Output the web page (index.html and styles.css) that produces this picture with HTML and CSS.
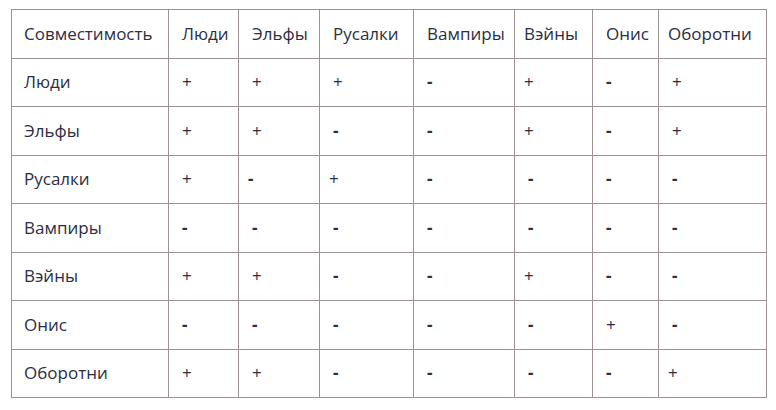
FILE: index.html
```html
<!DOCTYPE html>
<html lang="ru">
<head>
<meta charset="utf-8">
<link rel="stylesheet" href="styles.css">
</head>
<body>
<table class="compat">
<colgroup>
<col class="c0"><col class="c1"><col class="c2"><col class="c3"><col class="c4"><col class="c5"><col class="c6"><col class="c7">
</colgroup>
<tr class="head"><td>Совместимость</td><td>Люди</td><td>Эльфы</td><td>Русалки</td><td>Вампиры</td><td class="tight">Вэйны</td><td>Онис</td><td class="tight">Оборотни</td></tr>
<tr><td>Люди</td><td>+</td><td>+</td><td>+</td><td class="no">-</td><td class="tight">+</td><td class="no">-</td><td>+</td></tr>
<tr><td>Эльфы</td><td>+</td><td>+</td><td class="no">-</td><td class="no">-</td><td class="tight">+</td><td class="no">-</td><td>+</td></tr>
<tr><td>Русалки</td><td>+</td><td class="tight no">-</td><td class="tight">+</td><td class="no">-</td><td class="no">-</td><td class="no">-</td><td class="no">-</td></tr>
<tr><td>Вампиры</td><td class="no">-</td><td class="no">-</td><td class="no">-</td><td class="no">-</td><td class="no">-</td><td class="no">-</td><td class="no">-</td></tr>
<tr><td>Вэйны</td><td>+</td><td>+</td><td class="no">-</td><td class="no">-</td><td class="tight">+</td><td class="no">-</td><td class="no">-</td></tr>
<tr><td>Онис</td><td class="no">-</td><td class="no">-</td><td class="no">-</td><td class="no">-</td><td class="no">-</td><td>+</td><td class="no">-</td></tr>
<tr><td>Оборотни</td><td>+</td><td>+</td><td class="no">-</td><td class="no">-</td><td class="no">-</td><td class="no">-</td><td class="tight">+</td></tr>
</table>
</body>
</html>
```
FILE: styles.css
```css
html, body {
  margin: 0;
  padding: 0;
  background: #ffffff;
}
body {
  padding: 9px 0 0 11px;
  font-family: "Open Sans", "Liberation Sans", sans-serif;
  font-size: 17px;
  color: #2b2e44;
}
.compat {
  border-collapse: collapse;
  table-layout: fixed;
  width: 755px;
}
.c0 { width: 157px; }
.c1 { width: 70px; }
.c2 { width: 81px; }
.c3 { width: 94px; }
.c4 { width: 101px; }
.c5 { width: 78px; }
.c6 { width: 66px; }
.c7 { width: 108px; }
.compat td {
  border: 1px solid #9c9295;
  height: 48.5px;
  padding: 0 0 1px 13px;
  text-align: left;
  vertical-align: middle;
  white-space: nowrap;
  box-sizing: border-box;
}
.compat td.tight {
  padding-left: 9px;
}
.compat td:first-child {
  padding-left: 12px;
}
.compat td.no {
  font-weight: 700;
}
```
